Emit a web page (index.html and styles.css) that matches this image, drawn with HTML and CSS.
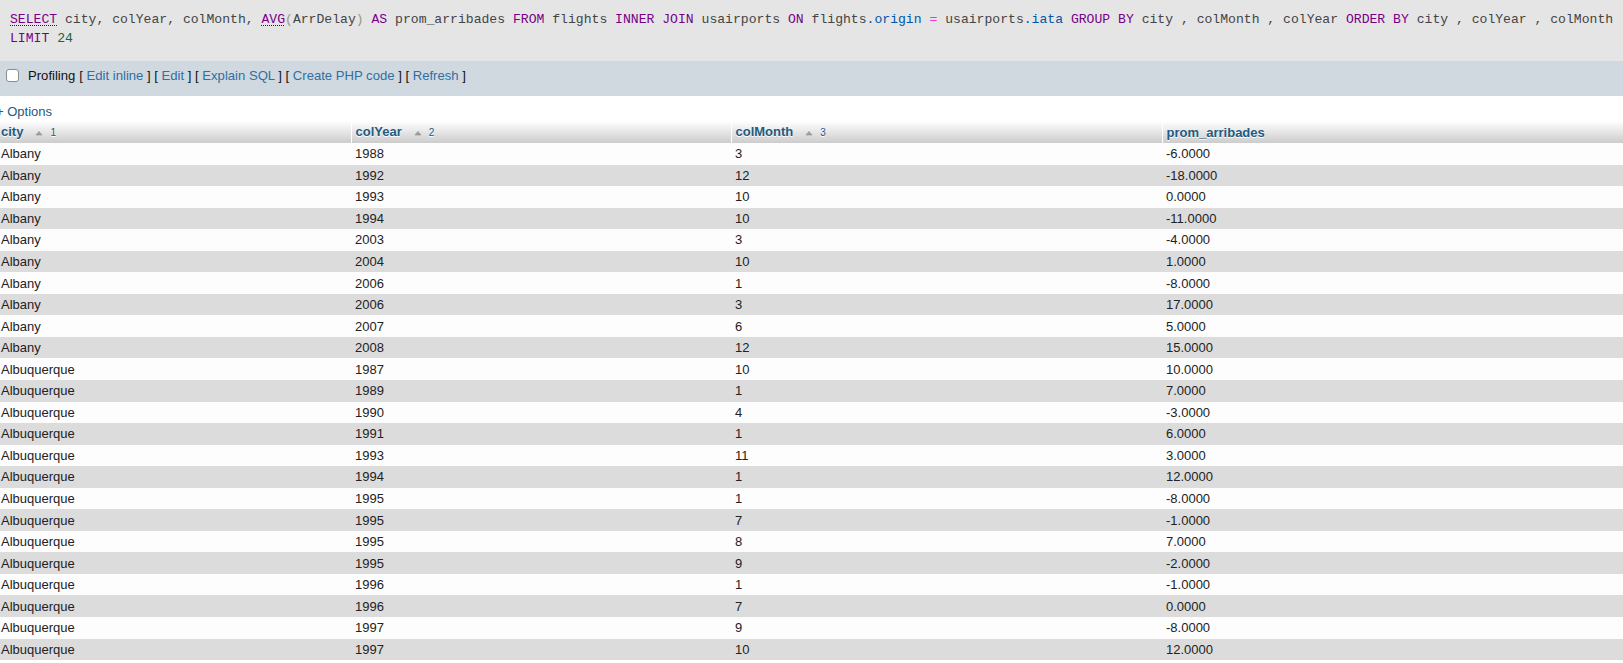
FILE: index.html
```html
<!DOCTYPE html>
<html>
<head>
<meta charset="utf-8">
<title>SQL result</title>
<link rel="stylesheet" href="styles.css">
</head>
<body>
<div class="sql-box"><code class="sql"><span class="kw dfn">SELECT</span> city, colYear, colMonth, <span class="kw dfn">AVG</span><span class="br">(</span>ArrDelay<span class="br">)</span> <span class="kw">AS</span> prom_arribades <span class="kw">FROM</span> flights <span class="kw">INNER</span> <span class="kw">JOIN</span> usairports <span class="kw">ON</span> flights<span class="var">.origin</span> <span class="op">=</span> usairports<span class="var">.iata</span> <span class="kw">GROUP</span> <span class="kw">BY</span> city , colMonth , colYear <span class="kw">ORDER</span> <span class="kw">BY</span> city , colYear , colMonth<br><span class="kw">LIMIT</span> <span class="num">24</span></code></div>
<div class="tools">
  <label class="profiling"><input type="checkbox" class="chk"><span>Profiling</span></label>
  <span class="links">[ <a href="#">Edit inline</a> ] [ <a href="#">Edit</a> ] [ <a href="#">Explain SQL</a> ] [ <a href="#">Create PHP code</a> ] [ <a href="#">Refresh</a> ]</span>
</div>
<div class="options"><a href="#">+ Options</a></div>
<table class="results">
  <colgroup><col class="c1"><col class="c2"><col class="c3"><col class="c4"></colgroup>
  <thead>
    <tr>
      <th><a href="#">city<span class="sort"><svg width="16" height="8" viewBox="0 0 16 8"><polygon points="5,7 8,3.5 11,7" fill="#a0a0a0" stroke="#8c8c8c" stroke-width="0.6"/></svg></span><small>1</small></a></th>
      <th><a href="#">colYear<span class="sort"><svg width="16" height="8" viewBox="0 0 16 8"><polygon points="5,7 8,3.5 11,7" fill="#a0a0a0" stroke="#8c8c8c" stroke-width="0.6"/></svg></span><small>2</small></a></th>
      <th><a href="#">colMonth<span class="sort"><svg width="16" height="8" viewBox="0 0 16 8"><polygon points="5,7 8,3.5 11,7" fill="#a0a0a0" stroke="#8c8c8c" stroke-width="0.6"/></svg></span><small>3</small></a></th>
      <th><a href="#">prom_arribades</a></th>
    </tr>
  </thead>
  <tbody>
    <tr class="odd"><td>Albany</td><td>1988</td><td>3</td><td>-6.0000</td></tr>
    <tr class="even"><td>Albany</td><td>1992</td><td>12</td><td>-18.0000</td></tr>
    <tr class="odd"><td>Albany</td><td>1993</td><td>10</td><td>0.0000</td></tr>
    <tr class="even"><td>Albany</td><td>1994</td><td>10</td><td>-11.0000</td></tr>
    <tr class="odd"><td>Albany</td><td>2003</td><td>3</td><td>-4.0000</td></tr>
    <tr class="even"><td>Albany</td><td>2004</td><td>10</td><td>1.0000</td></tr>
    <tr class="odd"><td>Albany</td><td>2006</td><td>1</td><td>-8.0000</td></tr>
    <tr class="even"><td>Albany</td><td>2006</td><td>3</td><td>17.0000</td></tr>
    <tr class="odd"><td>Albany</td><td>2007</td><td>6</td><td>5.0000</td></tr>
    <tr class="even"><td>Albany</td><td>2008</td><td>12</td><td>15.0000</td></tr>
    <tr class="odd"><td>Albuquerque</td><td>1987</td><td>10</td><td>10.0000</td></tr>
    <tr class="even"><td>Albuquerque</td><td>1989</td><td>1</td><td>7.0000</td></tr>
    <tr class="odd"><td>Albuquerque</td><td>1990</td><td>4</td><td>-3.0000</td></tr>
    <tr class="even"><td>Albuquerque</td><td>1991</td><td>1</td><td>6.0000</td></tr>
    <tr class="odd"><td>Albuquerque</td><td>1993</td><td>11</td><td>3.0000</td></tr>
    <tr class="even"><td>Albuquerque</td><td>1994</td><td>1</td><td>12.0000</td></tr>
    <tr class="odd"><td>Albuquerque</td><td>1995</td><td>1</td><td>-8.0000</td></tr>
    <tr class="even"><td>Albuquerque</td><td>1995</td><td>7</td><td>-1.0000</td></tr>
    <tr class="odd"><td>Albuquerque</td><td>1995</td><td>8</td><td>7.0000</td></tr>
    <tr class="even"><td>Albuquerque</td><td>1995</td><td>9</td><td>-2.0000</td></tr>
    <tr class="odd"><td>Albuquerque</td><td>1996</td><td>1</td><td>-1.0000</td></tr>
    <tr class="even"><td>Albuquerque</td><td>1996</td><td>7</td><td>0.0000</td></tr>
    <tr class="odd"><td>Albuquerque</td><td>1997</td><td>9</td><td>-8.0000</td></tr>
    <tr class="even"><td>Albuquerque</td><td>1997</td><td>10</td><td>12.0000</td></tr>
  </tbody>
</table>
</body>
</html>
```
FILE: styles.css
```css
html, body {
  margin: 0;
  padding: 0;
  background: #fff;
}
body {
  font-family: "Liberation Sans", Arial, sans-serif;
  font-size: 13px;
  color: #222;
  overflow: hidden;
}
a {
  color: #235a81;
  text-decoration: none;
}

/* SQL query box */
.sql-box {
  background: #e5e5e5;
  height: 61px;
  box-sizing: border-box;
  padding: 10px 0 0 10px;
  overflow: hidden;
}
.sql {
  font-family: "Liberation Mono", "Courier New", monospace;
  font-size: 13.1px;
  line-height: 19px;
  color: #444;
  white-space: nowrap;
  display: block;
}
.kw { color: #770088; }
.dfn {
  text-decoration: underline dotted #222;
  text-underline-offset: 2px;
  text-decoration-thickness: 1px;
}
.br { color: #999977; }
.var { color: #0055aa; }
.op { color: #ee33dd; }
.num { color: #116644; }

/* tools bar */
.tools {
  background: #d0d9e0;
  height: 35px;
  box-sizing: border-box;
  padding: 7px 0 0 6px;
  display: flex;
  align-items: flex-start;
  line-height: 15px;
  font-size: 13.1px;
  color: #111;
}
.profiling {
  display: flex;
  align-items: center;
  gap: 9px;
  margin-right: 4px;
}
.chk {
  appearance: none;
  -webkit-appearance: none;
  margin: 0;
  width: 13px;
  height: 13px;
  box-sizing: border-box;
  border: 1px solid #8d8d8d;
  border-radius: 3px;
  background: #fff;
}
.links a { color: #2f6fa3; }

/* options */
.options {
  margin-top: 8px;
  line-height: 15px;
  margin-left: -4px;
}

/* results table */
.results {
  width: 100%;
  border-collapse: collapse;
  table-layout: fixed;
  margin-top: 2px;
}
.c1 { width: 351px; }
.c2 { width: 380px; }
.c3 { width: 431px; }
.results th {
  height: 22px;
  padding: 0 2px 0 4px;
  text-align: left;
  vertical-align: middle;
  background: linear-gradient(#ffffff, #cccccc);
  border-right: 1px solid #fff;
  font-weight: bold;
  line-height: 15px;
  text-shadow: 0 1px 0 #fff;
  white-space: nowrap;
}
.results th:first-child { padding-left: 1px; }
.results th:last-child { border-right: 0; }
.results th a { color: #235a81; }
.sort {
  display: inline-block;
  width: 16px;
  height: 8px;
  margin: 0 3px 0 8px;
}
.sort svg { display: block; }
.results th small {
  font-size: 10px;
  font-weight: normal;
}
.results td {
  height: 21.55px;
  padding: 0 2px 0 1px;
  vertical-align: middle;
  line-height: 15px;
  white-space: nowrap;
}
.results td + td { padding-left: 4px; }
.odd td { background: #fdfdfd; }
.even td { background: #dcdcdc; }
```
